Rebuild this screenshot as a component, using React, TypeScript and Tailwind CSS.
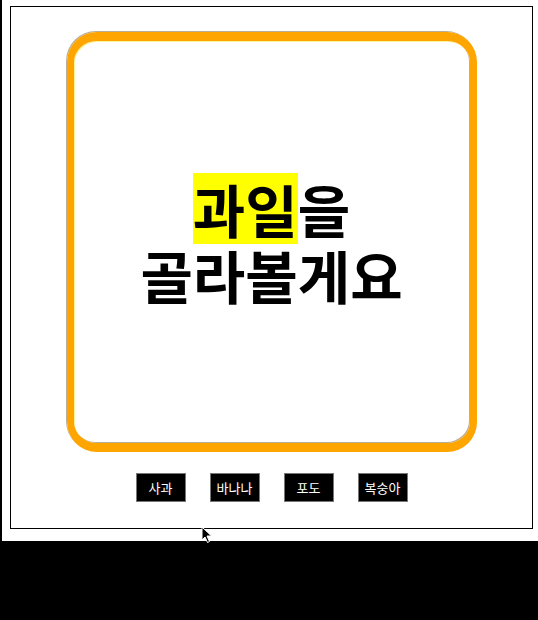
import React from "react";

const KR = { fontFamily: '"Noto Sans CJK KR", "Noto Sans", sans-serif' };

export default function App() {
  const fruits = ["사과", "바나나", "포도", "복숭아"];
  return (
    <div className="relative w-[538px] h-[620px] bg-black overflow-hidden" style={KR}>
      <div className="h-[541px] ml-[2px] bg-white pt-[6px] pl-[8px]">
        <div className="w-[523px] h-[523px] border border-black flex flex-col items-center pt-[25px]">
          <div className="w-[410px] h-[420px] border-x-[7px] border-y-[9px] border-[#ffa500] rounded-[30px] flex flex-col items-center justify-center shadow-[-1px_-1px_0_#b9ae98,inset_-1px_-1px_0_#b9ae98,inset_1px_1px_0_#fff59d]">
            <div className="text-[57px] font-bold leading-[66px] text-black text-center mt-[-2px]">
              <div>
                <span className="inline-block bg-[#ffff00] leading-[66px] pt-[2px] pb-[3px] mt-[-2px] mb-[-3px]">과일</span>을
              </div>
              <div>골라볼게요</div>
            </div>
          </div>
          <div className="flex gap-[24px] mt-[21px]">
            {fruits.map((f) => (
              <button
                key={f}
                className="w-[50px] h-[29px] bg-black text-white text-[13px] border border-[#777] flex items-center justify-center"
              >
                {f}
              </button>
            ))}
          </div>
        </div>
      </div>
      <svg className="absolute left-[201px] top-[526px]" width="12" height="18" viewBox="0 0 12 18">
        <path d="M1 1 L1 14 L4 11 L6.5 16.5 L8.5 15.5 L6 10 L10.5 10 Z" fill="black" stroke="white" strokeWidth="1" />
      </svg>
    </div>
  );
}
